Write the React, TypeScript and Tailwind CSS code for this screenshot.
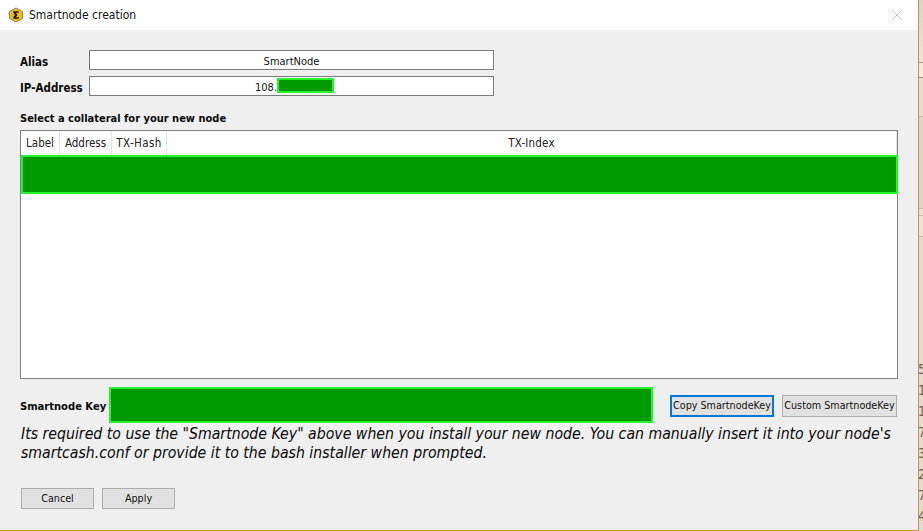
/* Smartnode creation dialog */

const fontStack = "font-['DejaVu_Sans_Condensed','DejaVu_Sans',sans-serif]";

function AppIcon() {
  return (
    <svg width="16" height="16" viewBox="0 0 16 16">
      <path d="M8 1l6.5 3.5v7L8 15l-6.5-3.5v-7z" fill="#f2b90f" stroke="#8c8468" strokeWidth="1" />
      <path d="M5.2 4.2h5.6v1.6H7.9L9.4 8 7.9 10.2h2.9v1.6H5.2v-1.2L7 8 5.2 5.4z" fill="#1c1c1c" />
    </svg>
  );
}

function GreenBlock({ className }: { className: string }) {
  return <div className={`bg-[#009900] border-2 border-[#29f22f] shrink-0 ${className}`} />;
}

function Field({ label, children, className }: { label: string; children: React.ReactNode; className: string }) {
  return (
    <div className="flex items-center h-5">
      <span className="w-[69px] pt-[5px] text-[11.5px] font-bold text-[#0a0a0a]">{label}</span>
      <div className={`w-[405px] h-5 bg-white border border-[#7a7a7a] flex items-center text-[11px] text-[#111] ${className}`}>
        {children}
      </div>
    </div>
  );
}

function HeaderCell({ children, className }: { children: string; className: string }) {
  return (
    <div className={`h-full pt-[1px] flex items-center justify-center border-r border-[#e3e3e3] text-[11.5px] text-[#222] ${className}`}>
      {children}
    </div>
  );
}

const buttonClass = "flex items-center justify-center whitespace-nowrap bg-[#e1e1e1] text-[10.7px] text-[#111]";

// the neighbouring window peeks out behind the dialog on the right
function BehindWindow() {
  const digits = ["5", "1", "1", "7", "3", "2", "7", "4"];
  return (
    <div className="flex-1 h-full overflow-hidden flex flex-col bg-[#dcdcdc]">
      <div className="h-[62px] bg-gradient-to-b from-[#d4d4d4] to-[#e6e6e6]" />
      <div className="h-[1px] bg-[#9a9a9a]" />
      <div className="h-[14px] bg-[#ececec]" />
      <div className="h-[1px] bg-[#8f8f8f]" />
      <div className="h-[38px] bg-[#dedede]" />
      <div className="h-[1px] bg-[#bdbdbd]" />
      <div className="h-[91px] bg-[#d6d6d6]" />
      <div className="h-[1px] bg-[#bdbdbd]" />
      <div className="h-[6px] bg-[#e4e4e4]" />
      <div className="h-[1px] bg-[#bdbdbd]" />
      <div className="h-[20px] bg-[#e4e4e4]" />
      <div className="h-[1px] bg-[#bdbdbd]" />
      <div className="h-[122px] bg-[#dcdcdc]" />
      <div className="flex flex-col text-[14px] leading-[21px] text-[#666]">
        {digits.map((d, i) => (
          <span key={i} className="block w-[9px] ml-[-1px]">{d}</span>
        ))}
      </div>
    </div>
  );
}

export default function App() {
  return (
    <div className={`w-[923px] h-[531px] overflow-hidden flex bg-[#dcdcdc] ${fontStack}`}>
      <div className="w-[919px] h-[531px] shrink-0 flex flex-col bg-[#efefef] border-r border-b border-[#d98f2b]">
        {/* Title bar */}
        <div className="h-[30px] shrink-0 bg-white flex items-center pl-[8px] pr-[15px]">
          <AppIcon />
          <span className="ml-[5px] text-[12px] text-[#111]">Smartnode creation</span>
          <svg className="ml-auto" width="12" height="12" viewBox="0 0 12 12" fill="none" stroke="#c4c4c4" strokeWidth="1">
            <path d="M1 1l10 10M11 1L1 11" />
          </svg>
        </div>

        {/* Form */}
        <div className="flex-1 flex flex-col pl-[20px] pr-[20px] pt-[20px]">
          <div className="flex flex-col gap-[6px]">
            <Field label="Alias" className="justify-center">
              <span className="pt-[4px]">SmartNode</span>
            </Field>
            <Field label="IP-Address" className="pl-[165px]">
              <span className="w-[22px] pt-[4px] shrink-0">108.</span>
              <GreenBlock className="w-[57px] h-[15px] mt-[-1px]" />
            </Field>
          </div>

          <div className="mt-[16px] text-[11px] font-bold text-[#0a0a0a] leading-[14px]">
            Select a collateral for your new node
          </div>

          {/* Collateral table */}
          <div className="mt-[4px] h-[249px] bg-white border border-[#7f7f8a]">
            <div className="h-[24px] flex">
              <HeaderCell className="w-[39px]">Label</HeaderCell>
              <HeaderCell className="w-[52px]">Address</HeaderCell>
              <HeaderCell className="w-[55px] tracking-[0.4px]">TX-Hash</HeaderCell>
              <HeaderCell className="flex-1 tracking-[0.2px]">TX-Index</HeaderCell>
            </div>
            <GreenBlock className="h-[39px] mr-[-1px]" />
          </div>

          {/* Smartnode key */}
          <div className="mt-[8px] flex items-center h-[36px]">
            <span className="w-[89px] pt-[5px] text-[11.1px] font-bold text-[#0a0a0a] whitespace-nowrap">Smartnode Key</span>
            <GreenBlock className="w-[544px] h-[36px]" />
            <button className={`ml-[17px] w-[104px] h-[22px] mt-[1px] shrink-0 pt-[1px] border-2 border-[#0078d7] ${buttonClass}`}>
              Copy SmartnodeKey
            </button>
            <button className={`ml-[8px] w-[115px] h-[22px] mt-[1px] shrink-0 pt-[1px] border border-[#adadad] ${buttonClass}`}>
              Custom SmartnodeKey
            </button>
          </div>

          <p className="mt-[1px] ml-[1px] text-[15.7px] leading-[19px] italic text-[#0a0a0a] whitespace-nowrap">
            Its required to use the "Smartnode Key" above when you install your new node. You can manually insert it into your node's
            <br />
            smartcash.conf or provide it to the bash installer when prompted.
          </p>

          <div className="mt-[26px] ml-[1px] flex gap-[8px]">
            <button className={`w-[73px] h-[21px] pt-[1px] border border-[#adadad] ${buttonClass}`}>Cancel</button>
            <button className={`w-[73px] h-[21px] pt-[1px] border border-[#adadad] ${buttonClass}`}>Apply</button>
          </div>
        </div>
      </div>
      <BehindWindow />
    </div>
  );
}
